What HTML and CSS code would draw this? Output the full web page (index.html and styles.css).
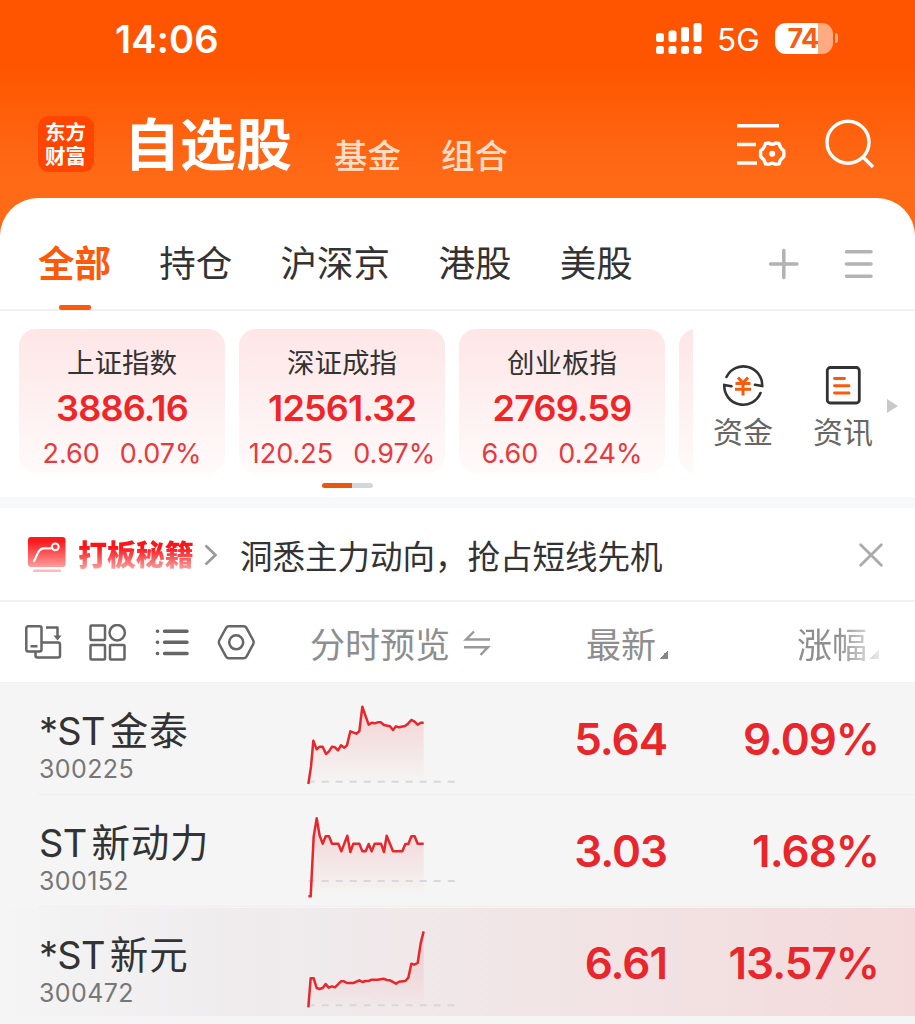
FILE: index.html
```html
<!DOCTYPE html>
<html lang="zh-CN">
<head>
<meta charset="utf-8">
<title>自选股</title>
<link rel="stylesheet" href="styles.css">
</head>
<body>
<div class="app">
  <header class="header">
    <div class="status">
      <span class="time">14:06</span>
      <svg class="signal" width="46" height="31" viewBox="0 0 46 31" fill="#fff">
        <rect x="0" y="10" width="8" height="9" rx="2.5"/><rect x="12.5" y="7.5" width="8" height="11.5" rx="2.5"/><rect x="25" y="4" width="8" height="15" rx="2.5"/><rect x="37.500" y="0" width="8" height="19" rx="2.5"/>
        <rect x="0" y="23" width="8" height="8" rx="2.500"/><rect x="12.500" y="23" width="8" height="8" rx="2.500"/><rect x="25" y="23" width="8" height="8" rx="2.500"/><rect x="37.500" y="23" width="8" height="8" rx="2.500"/>
      </svg>
      <span class="net">5G</span>
      <span class="battery">74</span>
      <span class="nub"></span>
    </div>
    <div class="titlebar">
      <div class="logo"><span>东方</span><span>财富</span></div>
      <h1 class="title">自选股</h1>
      <span class="subtitle">基金</span>
      <span class="subtitle second">组合</span>
      <svg class="head-icons" width="140" height="52" viewBox="0 0 140 52" fill="none" stroke="#fff" stroke-width="3.4">
        <path d="M0 6.800H42M0 25.500H19M0 44H20"/>
        <path stroke-linejoin="round" d="M46.900 34.700 L46.800 37.600 Q43 40.300 42 44.900 L38.600 45.400 Q35.200 43 31.800 45.400 L28.400 44.900 Q27.500 40.300 23.600 37.600 L23.600 31.800 Q27.500 29.100 28.400 24.500 L31.800 24 Q35.200 26.400 38.600 24 L42 24.500 Q43 29.100 46.800 31.800 Z"/>
        <circle cx="35.200" cy="34.700" r="3" fill="#fff" stroke="none"/>
        <circle cx="111" cy="23.200" r="21"/>
        <path d="M125.500 37.500L136 48"/>
      </svg>
    </div>
  </header>

  <main class="sheet">
    <nav class="tabs">
      <span class="tab active">全部</span>
      <span class="tab">持仓</span>
      <span class="tab">沪深京</span>
      <span class="tab">港股</span>
      <span class="tab">美股</span>
      <svg class="tab-icons" width="106" height="32" viewBox="0 0 106 32" fill="none" stroke="#b3b3b3" stroke-width="3.500" stroke-linecap="round">
        <path d="M2.500 16H29M15.800 2.500V29.500M78.500 3.700H103M78.500 16H103M78.500 28.200H103"/>
      </svg>
    </nav>

    <section class="indices">
      <div class="cards">
        <div class="card"><span class="card-name">上证指数</span><b class="card-value">3886.16</b><span class="card-change"><i>2.60</i><i>0.07%</i></span></div>
        <div class="card"><span class="card-name">深证成指</span><b class="card-value">12561.32</b><span class="card-change"><i>120.25</i><i>0.97%</i></span></div>
        <div class="card"><span class="card-name">创业板指</span><b class="card-value">2769.59</b><span class="card-change"><i>6.60</i><i>0.24%</i></span></div>
        <div class="card"></div>
      </div>
      <div class="shortcut">
        <svg width="44" height="44" viewBox="0 0 44 44" fill="none" stroke="#333" stroke-width="2.600">
          <path d="M5.500 14A18.800 18.800 0 0 1 41.200 23L34 21.800M39.500 30A18.800 18.800 0 0 1 3.300 22L10.500 23.200" stroke-linecap="round"/>
          <path stroke="#fa5a0a" stroke-width="3" d="M17 14.500L22 20L27 14.500M14.500 20.500H29.500M14 26.200H30M22 20V32.500"/>
        </svg>
        <span>资金</span>
      </div>
      <div class="shortcut">
        <svg width="44" height="44" viewBox="0 0 44 44" fill="none" stroke="#333" stroke-width="2.800">
          <rect x="6.300" y="4.500" width="32" height="35.500" rx="3"/>
          <path stroke="#fa5a0a" stroke-width="2.900" stroke-linecap="round" d="M13.500 15.500H23.500M13.500 22.700H28M13.500 30H28"/>
        </svg>
        <span>资讯</span>
      </div>
      <span class="more"></span>
      <span class="pager"></span>
    </section>

    <section class="promo">
      <svg width="38" height="36" viewBox="0 0 38 36">
        <defs><linearGradient id="badge" x1="0" y1="0" x2="0" y2="1"><stop offset=".15" stop-color="#fb1a1d"/><stop offset="1" stop-color="#fd9c9c"/></linearGradient></defs>
        <rect x="0" y="0" width="37.500" height="30" rx="3" fill="url(#badge)"/>
        <rect x="5" y="32.500" width="28" height="2.600" rx="1.300" fill="#fdb9bb"/>
        <path d="M6 24C9 20 9 12.500 15 11.300H23" fill="none" stroke="#fff" stroke-width="2.200" stroke-linecap="round"/>
        <circle cx="27.300" cy="9.800" r="3.400" fill="none" stroke="#fff" stroke-width="2"/>
      </svg>
      <b class="promo-tag">打板秘籍</b>
      <svg class="chevron" width="14" height="22" viewBox="0 0 14 22" fill="none" stroke="#999" stroke-width="2.600"><path d="M1.500 1.500L11.500 11L1.500 20.500"/></svg>
      <span class="promo-text">洞悉主力动向，抢占短线先机</span>
      <svg class="close" width="24" height="24" viewBox="0 0 24 24" fill="none" stroke="#aaa" stroke-width="2.800" stroke-linecap="round"><path d="M1.700 1.700L22.300 22.300M22.300 1.700L1.700 22.300"/></svg>
    </section>

    <section class="columns">
      <svg class="tools" width="232" height="38" viewBox="0 0 232 38" fill="none" stroke="#666" stroke-width="2.500" stroke-linejoin="round">
        <path d="M3.300 2.300H14.500Q16.500 2.300 16.500 4.300V25.500Q16.500 27.500 14.500 27.500H3.300Q1.300 27.500 1.300 25.500V4.300Q1.300 2.300 3.300 2.300ZM5.500 22.300H12.500M21 3.500H32.500V13.500M17 18.500H33Q35 18.500 35 20.500V31.500Q35 33.500 33 33.500H12.500Q10.500 33.500 10.500 31.500V28"/>
        <path d="M28.500 11.500H36.500L32.500 16.500Z" fill="#666" stroke="none"/>
        <rect x="65.500" y="1.500" width="14.500" height="14.500" rx="1"/><circle cx="92.200" cy="8.700" r="7.700"/><rect x="65.500" y="21" width="14.500" height="14.500" rx="1"/><rect x="85" y="21" width="14.500" height="14.500" rx="1"/>
        <path stroke-width="3.500" stroke-linecap="round" d="M139.500 7.300H162M139.500 18.300H162M139.500 29.500H162M132.400 7.300h.2M132.400 18.300h.2M132.400 29.500h.2"/>
        <path d="M204 2.300H218.500Q220.500 2.300 221.500 4L228.300 16.500Q229.300 18.300 228.300 20L221.500 32.600Q220.500 34.300 218.500 34.300H204Q202 34.300 201 32.600L194.200 20Q193.200 18.300 194.200 16.500L201 4Q202 2.300 204 2.300Z"/>
        <circle cx="211.200" cy="18.300" r="7"/>
      </svg>
      <span class="col preview">分时预览<svg width="28" height="28" viewBox="0 0 28 28" fill="none" stroke="#999" stroke-width="2.400"><path d="M27 10.500H3L11 2.500M1 18.200H25L17.500 26"/></svg></span>
      <span class="col latest">最新<i class="sort"></i></span>
      <span class="col change">涨幅<i class="sort"></i></span>
    </section>

    <section class="stocks">
      <article class="stock">
        <div class="who"><span class="name"><em>*ST</em>金泰</span><span class="code">300225</span></div>
        <svg class="spark" width="180" height="112" viewBox="0 0 180 112">
          <defs><linearGradient id="area" x1="0" y1="0" x2="0" y2="1"><stop offset="0" stop-color="#ef3a3f" stop-opacity=".19"/><stop offset="1" stop-color="#ef3a3f" stop-opacity="0"/></linearGradient></defs>
          <g transform="translate(0 7) scale(.33333)">
            <path class="area" d="M55 282L63 230L70 152L80 178L89 170H98L108 192L117 184L126 170L135 172L144 181L153 166L163 173L171 166L181 124L199 131L208 124L217 50L226 76L236 104L245 98L254 100L263 97H272L282 105L300 109L309 120L318 109L327 112L345 108L354 101L364 90L373 94L383 104L392 98H401V282Z"/>
            <path class="base" d="M55 275H495"/>
            <path class="line" d="M55 282L63 230L70 152L80 178L89 170H98L108 192L117 184L126 170L135 172L144 181L153 166L163 173L171 166L181 124L199 131L208 124L217 50L226 76L236 104L245 98L254 100L263 97H272L282 105L300 109L309 120L318 109L327 112L345 108L354 101L364 90L373 94L383 104L392 98H401"/>
          </g>
        </svg>
        <b class="num">5.64</b><b class="num">9.09%</b>
      </article>
      <article class="stock">
        <div class="who"><span class="name"><em>ST</em>新动力</span><span class="code">300152</span></div>
        <svg class="spark" width="180" height="112" viewBox="0 0 180 112">
          <g transform="translate(0 5) scale(.33333)">
            <path class="area" d="M55 289H62L71 110L80 55L89 107L98 131L107 109H117L126 131H145L154 154L172 107L181 156L190 131H208L217 154H227L236 132L245 154L254 131H273L282 156L290 107L309 154H337L346 132H355L364 109H374L383 131H401V289Z"/>
            <path class="base" d="M55 243H495"/>
            <path class="line" d="M55 289H62L71 110L80 55L89 107L98 131L107 109H117L126 131H145L154 154L172 107L181 156L190 131H208L217 154H227L236 132L245 154L254 131H273L282 156L290 107L309 154H337L346 132H355L364 109H374L383 131H401"/>
          </g>
        </svg>
        <b class="num">3.03</b><b class="num">1.68%</b>
      </article>
      <article class="stock hot">
        <div class="who"><span class="name"><em>*ST</em>新元</span><span class="code">300472</span></div>
        <svg class="spark" width="180" height="112" viewBox="0 0 180 112">
          <g transform="translate(0 3) scale(.33333)">
            <path class="area" d="M55 292L62 205H71L80 234L89 237L98 234L107 222L116 233L126 229L135 232L153 214H162L171 219H190L208 211L217 216L227 213H236L245 209H263L281 206L290 210L300 211L318 221L327 215L346 213L355 203L364 161L373 164L383 159L392 100L401 64V282H55Z"/>
            <path class="base" d="M55 286H495"/>
            <path class="line" d="M55 292L62 205H71L80 234L89 237L98 234L107 222L116 233L126 229L135 232L153 214H162L171 219H190L208 211L217 216L227 213H236L245 209H263L281 206L290 210L300 211L318 221L327 215L346 213L355 203L364 161L373 164L383 159L392 100L401 64"/>
          </g>
        </svg>
        <b class="num">6.61</b><b class="num">13.57%</b>
      </article>
    </section>
  </main>
</div>
</body>
</html>
```
FILE: styles.css
```css
* { box-sizing: border-box; }
body { margin: 0; background: #f7f7f7; font-family: Inter, "Noto Sans CJK SC", sans-serif; color: #333; }
i, em { font-style: normal; }
svg { display: block; flex: none; }
.app { width: 915px; height: 1024px; overflow: hidden; background: linear-gradient(#ff5500 0, #ff5500 65px, #ff6a17 175px, #ff6a17 300px); white-space: nowrap; }

.header { height: 198px; color: #fff; }
.status { display: flex; align-items: center; height: 76px; padding-left: 115px; }
.time { width: 541px; padding-top: 1px; font-size: 38px; font-weight: 600; letter-spacing: .2px; }
.net { width: 58px; margin-left: 15px; font-size: 31.5px; font-weight: 400; padding-top: 2px; }
.battery { width: 58px; height: 31px; border-radius: 11px; background: linear-gradient(90deg, #fff 43px, rgba(255,255,255,.5) 43px); color: #f65e14; font-size: 27px; font-weight: 700; line-height: 32px; text-align: center; letter-spacing: -.8px; padding-right: 2px; }
.nub { width: 3px; height: 10px; margin-left: 2px; border-radius: 0 4px 4px 0; background: rgba(255,255,255,.5); }
.titlebar { display: flex; padding: 40px 0 0 38px; }
.logo { width: 56px; height: 56px; padding: 5px 0 0 7px; border-radius: 11px; background: #ff4500; font: 700 20.5px/24px "Liberation Sans", "Noto Sans CJK SC", sans-serif; }
.logo span { display: block; }
.title { width: 210px; margin: 0 0 0 30px; font-size: 56px; line-height: 58px; font-weight: 700; }
.subtitle { width: 107px; padding-top: 18px; font-size: 33.5px; line-height: 44px; font-weight: 500; color: #ffdcc6; }
.subtitle.second { width: 296px; }
.head-icons { margin-top: 3px; }

.sheet { height: 826px; border-radius: 38px 38px 0 0; background: #fff; overflow: hidden; }
.tabs { display: flex; align-items: center; gap: 48.3px; height: 113px; padding: 21px 0 0 38px; border-bottom: 2px solid #f1f1f2; }
.tab { height: 90px; font-size: 36.5px; line-height: 91px; }
.tab.active { position: relative; color: #fa5a0a; font-weight: 700; }
.tab.active::after { content: ""; position: absolute; left: 21px; bottom: -1px; width: 32px; height: 5px; border-radius: 2px; background: #fa5a0a; }
.tab-icons { margin-left: 87px; margin-bottom: 1px; }

.indices { position: relative; display: flex; height: 186px; padding: 18px 0 0 19px; }
.cards { display: flex; gap: 14px; width: 674px; margin-right: 0; overflow: hidden; }
.card { display: flex; flex: none; flex-direction: column; align-items: center; width: 206px; height: 144px; border-radius: 17px; background: linear-gradient(#fee6e7, #fffafa); }
.card-name { height: 56px; padding-top: 12px; font-size: 27.5px; line-height: 45px; }
.card-value { height: 46px; font-size: 36px; line-height: 46px; font-weight: 600; letter-spacing: -.8px; color: #ef2528; }
.card-change { display: flex; gap: 20px; font-size: 27px; line-height: 46px; color: #e83a3c; }
.shortcut { display: flex; flex-direction: column; align-items: center; width: 100px; padding-top: 34px; font-size: 30px; line-height: 41px; color: #666; }
.shortcut span { margin-top: 5px; }
.more { width: 0; height: 14px; margin: 70px 0 0 -6px; border-left: 11px solid #c9c9c9; border-top: 7px solid transparent; border-bottom: 7px solid transparent; }
.pager { position: absolute; left: 322px; top: 172px; width: 51px; height: 5px; border-radius: 3px; background: linear-gradient(90deg, #e9570e 30px, #d4d6dc 30px); }

.promo { display: flex; align-items: center; height: 105px; padding: 5px 0 3px 28px; border-top: 11px solid #f7f8fa; border-bottom: 2px solid #f1f1f2; }
.promo-tag { width: 126px; margin: -5px 0 0 12px; font: 900 29px/36px "Noto Sans CJK SC", sans-serif; letter-spacing: -.1px; background: linear-gradient(#fb1418 35%, #fda0a0 95%); -webkit-background-clip: text; background-clip: text; color: transparent; }
.promo-text { width: 619px; margin: -1px 0 0 22px; font-size: 32.5px; }

.columns { position: relative; display: flex; align-items: center; height: 81px; padding: 2px 0 0 25px; border-bottom: 1px solid #f1f1f2; }
.col { display: flex; align-items: center; height: 44px; margin-top: -1px; font-size: 35px; color: #8e8e8e; }
.preview { width: 276px; margin-left: 53px; gap: 13px; }
.latest { width: 211px; }
.change { -webkit-mask-image: linear-gradient(90deg, #000 40px, rgba(0,0,0,.2) 80px); mask-image: linear-gradient(90deg, #000 40px, rgba(0,0,0,.2) 80px); }
.sort { width: 9px; height: 9px; margin: 24px 0 0 3px; background: linear-gradient(135deg, transparent 50%, #85858d 50%); }

.stocks { height: 342px; background: #f5f5f5; }
.stock { display: grid; grid-template-columns: 251px 180px 197px 212px; height: 112px; padding-left: 39px; background: linear-gradient(#efeff0, #efeff0) 38px 111px / 877px 1px no-repeat; }
.who { display: flex; flex-direction: column; }
.name { height: 66px; padding-top: 22px; font-size: 38.5px; line-height: 53px; letter-spacing: .8px; }
.name em { margin-right: 5px; letter-spacing: -.7px; font-size: 38px; }
.code { margin-top: 4px; font-size: 25px; line-height: 32px; color: #777; letter-spacing: .4px; }
.num { font-size: 44px; line-height: 112px; font-weight: 600; text-align: right; color: #e8262b; letter-spacing: -1px; }
.stock.hot { height: 109px; border-top: 1px solid #f5f5f5; background: linear-gradient(90deg, #f5f5f5, #efecee 25%, #f1e6e7 55%, #f4dadb); }
.hot .who, .hot .spark, .hot .num { margin-top: -1px; }
.area { fill: url(#area); }
.line { fill: none; stroke: #e4282c; stroke-width: 7.5; stroke-linejoin: round; }
.base { fill: none; stroke: #d7d7dc; stroke-width: 6; stroke-dasharray: 21 21; stroke-dashoffset: 2; }
```
